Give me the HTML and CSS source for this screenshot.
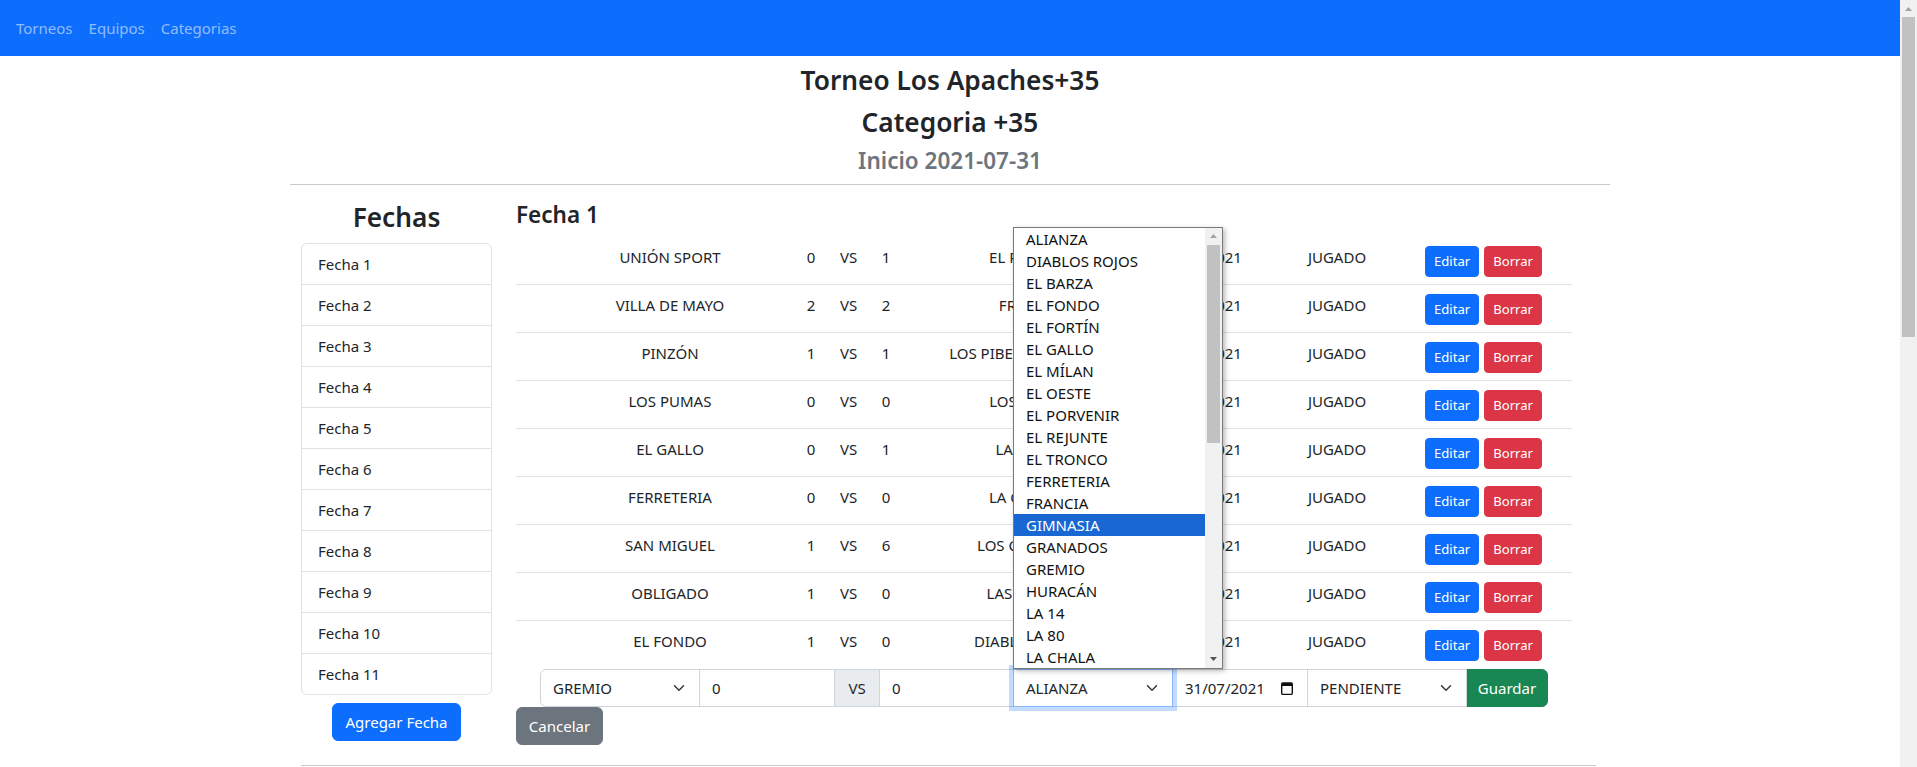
FILE: index.html
```html
<!DOCTYPE html>
<html lang="es">
<head>
<meta charset="utf-8">
<title>Torneo Los Apaches+35</title>
<link rel="stylesheet" href="styles.css">
</head>
<body>
<div class="app">
  <div class="page">
    <nav class="navbar">
      <a class="nav-link" href="#">Torneos</a>
      <a class="nav-link" href="#">Equipos</a>
      <a class="nav-link" href="#">Categorias</a>
    </nav>
    <main class="container">
      <header class="titles">
        <h3 class="title">Torneo Los Apaches+35</h3>
        <h3 class="title">Categoria +35</h3>
        <h4 class="subtitle">Inicio 2021-07-31</h4>
      </header>
      <hr class="rule-top">
      <div class="layout">
        <aside class="fechas">
          <h3 class="title">Fechas</h3>
          <ul class="list-group">
            <li class="list-item">Fecha 1</li>
            <li class="list-item">Fecha 2</li>
            <li class="list-item">Fecha 3</li>
            <li class="list-item">Fecha 4</li>
            <li class="list-item">Fecha 5</li>
            <li class="list-item">Fecha 6</li>
            <li class="list-item">Fecha 7</li>
            <li class="list-item">Fecha 8</li>
            <li class="list-item">Fecha 9</li>
            <li class="list-item">Fecha 10</li>
            <li class="list-item">Fecha 11</li>
          </ul>
          <button class="btn btn-primary agregar">Agregar Fecha</button>
        </aside>
        <section class="fecha">
          <h4 class="fecha-title">Fecha 1</h4>
          <div class="matches">
            <div class="match"><span></span><span class="cell">UNIÓN SPORT</span><span class="cell">0</span><span class="cell">VS</span><span class="cell">1</span><span class="cell">EL REJUNTE</span><span class="cell">31/07/2021</span><span class="cell">JUGADO</span><span class="actions"><button class="btn btn-sm btn-primary">Editar</button><button class="btn btn-sm btn-danger">Borrar</button></span></div>
            <div class="match"><span></span><span class="cell">VILLA DE MAYO</span><span class="cell">2</span><span class="cell">VS</span><span class="cell">2</span><span class="cell">FRANCIA</span><span class="cell">31/07/2021</span><span class="cell">JUGADO</span><span class="actions"><button class="btn btn-sm btn-primary">Editar</button><button class="btn btn-sm btn-danger">Borrar</button></span></div>
            <div class="match"><span></span><span class="cell">PINZÓN</span><span class="cell">1</span><span class="cell">VS</span><span class="cell">1</span><span class="cell">LOS PIBES DEL BARRIO</span><span class="cell">31/07/2021</span><span class="cell">JUGADO</span><span class="actions"><button class="btn btn-sm btn-primary">Editar</button><button class="btn btn-sm btn-danger">Borrar</button></span></div>
            <div class="match"><span></span><span class="cell">LOS PUMAS</span><span class="cell">0</span><span class="cell">VS</span><span class="cell">0</span><span class="cell">LOS TIGRES</span><span class="cell">31/07/2021</span><span class="cell">JUGADO</span><span class="actions"><button class="btn btn-sm btn-primary">Editar</button><button class="btn btn-sm btn-danger">Borrar</button></span></div>
            <div class="match"><span></span><span class="cell">EL GALLO</span><span class="cell">0</span><span class="cell">VS</span><span class="cell">1</span><span class="cell">LA CHALA</span><span class="cell">31/07/2021</span><span class="cell">JUGADO</span><span class="actions"><button class="btn btn-sm btn-primary">Editar</button><button class="btn btn-sm btn-danger">Borrar</button></span></div>
            <div class="match"><span></span><span class="cell">FERRETERIA</span><span class="cell">0</span><span class="cell">VS</span><span class="cell">0</span><span class="cell">LA CANCHA</span><span class="cell">31/07/2021</span><span class="cell">JUGADO</span><span class="actions"><button class="btn btn-sm btn-primary">Editar</button><button class="btn btn-sm btn-danger">Borrar</button></span></div>
            <div class="match"><span></span><span class="cell">SAN MIGUEL</span><span class="cell">1</span><span class="cell">VS</span><span class="cell">6</span><span class="cell">LOS CANARIOS</span><span class="cell">31/07/2021</span><span class="cell">JUGADO</span><span class="actions"><button class="btn btn-sm btn-primary">Editar</button><button class="btn btn-sm btn-danger">Borrar</button></span></div>
            <div class="match"><span></span><span class="cell">OBLIGADO</span><span class="cell">1</span><span class="cell">VS</span><span class="cell">0</span><span class="cell">LAS PALMAS</span><span class="cell">31/07/2021</span><span class="cell">JUGADO</span><span class="actions"><button class="btn btn-sm btn-primary">Editar</button><button class="btn btn-sm btn-danger">Borrar</button></span></div>
            <div class="match"><span></span><span class="cell">EL FONDO</span><span class="cell">1</span><span class="cell">VS</span><span class="cell">0</span><span class="cell">DIABLOS ROJOS</span><span class="cell">31/07/2021</span><span class="cell">JUGADO</span><span class="actions"><button class="btn btn-sm btn-primary">Editar</button><button class="btn btn-sm btn-danger">Borrar</button></span></div>
          </div>
          <div class="form-row">
            <div class="ctl select first w-select"><span>GREMIO</span><svg class="chev" width="16" height="12" viewBox="0 0 16 16"><path d="m2 5 6 6 6-6" fill="none" stroke="#343a40" stroke-width="2" stroke-linecap="round" stroke-linejoin="round"/></svg></div>
            <div class="ctl w-input1"><span>0</span></div>
            <div class="ctl addon">VS</div>
            <div class="ctl w-input2"><span>0</span></div>
            <div class="ctl select focused w-select"><span>ALIANZA</span><svg class="chev" width="16" height="12" viewBox="0 0 16 16"><path d="m2 5 6 6 6-6" fill="none" stroke="#343a40" stroke-width="2" stroke-linecap="round" stroke-linejoin="round"/></svg></div>
            <div class="ctl date w-input1"><span>31/07/2021</span><svg class="cal" width="16" height="16" viewBox="0 0 16 16"><rect x="2.7" y="3" width="10.6" height="11.4" rx="1.2" fill="none" stroke="#111" stroke-width="1.4"/><rect x="2.7" y="3" width="10.6" height="3" fill="#111"/></svg></div>
            <div class="ctl select w-select"><span>PENDIENTE</span><svg class="chev" width="16" height="12" viewBox="0 0 16 16"><path d="m2 5 6 6 6-6" fill="none" stroke="#343a40" stroke-width="2" stroke-linecap="round" stroke-linejoin="round"/></svg></div>
            <button class="btn btn-success guardar">Guardar</button>

            <div class="popup">
              <ul class="options">
                <li>ALIANZA</li>
                <li>DIABLOS ROJOS</li>
                <li>EL BARZA</li>
                <li>EL FONDO</li>
                <li>EL FORTÍN</li>
                <li>EL GALLO</li>
                <li>EL MÍLAN</li>
                <li>EL OESTE</li>
                <li>EL PORVENIR</li>
                <li>EL REJUNTE</li>
                <li>EL TRONCO</li>
                <li>FERRETERIA</li>
                <li>FRANCIA</li>
                <li class="selected">GIMNASIA</li>
                <li>GRANADOS</li>
                <li>GREMIO</li>
                <li>HURACÁN</li>
                <li>LA 14</li>
                <li>LA 80</li>
                <li>LA CHALA</li>
              </ul>
              <div class="sb sb-popup">
                <div class="sb-arrow"><svg width="7" height="4" viewBox="0 0 7 4"><path d="M0 4 3.5 0 7 4z" fill="#a3a3a3"/></svg></div>
                <div class="sb-thumb popup-thumb"></div>
                <div class="sb-spacer"></div>
                <div class="sb-arrow"><svg width="7" height="4" viewBox="0 0 7 4"><path d="M0 0h7L3.5 4z" fill="#505050"/></svg></div>
              </div>
            </div>
          </div>
          <button class="btn btn-secondary cancelar">Cancelar</button>
        </section>
      </div>
      <hr class="rule-bottom">
    </main>
  </div>
  <div class="sb sb-page">
    <div class="sb-arrow"><svg width="7" height="4" viewBox="0 0 7 4"><path d="M0 4 3.5 0 7 4z" fill="#a3a3a3"/></svg></div>
    <div class="sb-thumb page-thumb"></div>
  </div>
</div>
</body>
</html>
```
FILE: styles.css
```css
* { box-sizing: border-box; }

html, body {
  margin: 0;
  height: 100%;
}

body {
  font-family: "Noto Sans", "Open Sans", sans-serif;
  font-size: 15px;
  line-height: 24px;
  color: #212529;
  background: #fff;
  overflow: hidden;
}

.app {
  display: flex;
  height: 100vh;
}

.page {
  flex: 1;
  min-width: 0;
}

/* navbar */
.navbar {
  height: 56px;
  background: #0d6efd;
  display: flex;
  align-items: center;
  padding-left: 8px;
}

.nav-link {
  color: rgba(255, 255, 255, 0.55);
  text-decoration: none;
  padding: 0 8px;
}

/* container */
.container {
  width: 1320px;
  margin: 0 auto;
  padding-top: 8px;
}

.titles {
  text-align: center;
}

.title {
  font-size: 26.25px;
  font-weight: 600;
  line-height: 33.6px;
  margin: 0 0 8px;
}

.subtitle {
  font-size: 22.5px;
  font-weight: 600;
  line-height: 28.8px;
  margin: 0;
  color: #6c757d;
}

.rule-top {
  border: 0;
  border-top: 1px solid #c8c9ca;
  height: 0;
  margin: 8px 0 16px;
}

.rule-bottom {
  border: 0;
  border-top: 1px solid #c8c9ca;
  height: 0;
  width: 1295px;
  margin: 20px 0 0 11px;
}

.layout {
  display: flex;
  align-items: flex-start;
  gap: 24px;
  padding-left: 11px;
}

/* left column */
.fechas {
  width: 191px;
  display: flex;
  flex-direction: column;
  align-items: center;
}

.list-group {
  list-style: none;
  margin: 0;
  padding: 0;
  width: 100%;
  border: 1px solid #dee2e6;
  border-radius: 6px;
}

.list-item {
  padding: 8px 16px;
  line-height: 24px;
  border-bottom: 1px solid #dee2e6;
}

.list-item:last-child {
  border-bottom: 0;
}

/* buttons */
.btn {
  font-family: inherit;
  font-size: 15px;
  line-height: 24px;
  padding: 6px 12px;
  border: 1px solid transparent;
  border-radius: 6px;
  color: #fff;
  cursor: pointer;
}

.btn-primary { background: #0d6efd; border-color: #0d6efd; }
.btn-danger { background: #dc3545; border-color: #dc3545; }
.btn-success { background: #198754; border-color: #198754; }
.btn-secondary { background: #6c757d; border-color: #6c757d; }

.btn-sm {
  font-size: 13.125px;
  line-height: 21px;
  padding: 4px 8px;
  border-radius: 4px;
}

.agregar {
  margin-top: 8px;
}

/* right column */
.fecha {
  width: 1056px;
}

.fecha-title {
  font-size: 22.5px;
  font-weight: 600;
  line-height: 28.8px;
  margin: 0 0 7px;
}

.match {
  display: grid;
  grid-template-columns: 32px 244px 38px 37px 38px 250px 94px 176px 147px;
  height: 48px;
  border-bottom: 1px solid #dee2e6;
}

.match:last-child {
  border-bottom: 0;
}

.cell {
  padding-top: 8px;
  line-height: 24px;
  text-align: center;
  white-space: nowrap;
  display: flex;
  justify-content: center;
  overflow: visible;
}

.actions {
  display: flex;
  align-items: flex-start;
  gap: 5px;
  padding-top: 9px;
}

/* input group */
.form-row {
  position: relative;
  display: flex;
  width: 1008px;
  height: 38px;
  margin-left: 24px;
}

.ctl {
  position: relative;
  height: 38px;
  border: 1px solid #ced4da;
  padding: 6px 12px;
  line-height: 24px;
  margin-left: -1px;
  display: flex;
  align-items: center;
  justify-content: space-between;
  background: #fff;
  white-space: nowrap;
}

.ctl.first {
  margin-left: 0;
  border-radius: 6px 0 0 6px;
}

.w-select { width: 160px; }
.w-input1 { width: 136px; }
.w-input2 { width: 135px; }

.addon {
  width: 46px;
  justify-content: center;
  background: #e9ecef;
}

.focused {
  border-color: #86b7fe;
  box-shadow: 0 0 0 4px rgba(13, 110, 253, 0.25);
  z-index: 2;
}

.chev,
.cal {
  flex: none;
}

.guardar {
  margin-left: -1px;
  width: 82px;
  height: 38px;
  border-radius: 0 6px 6px 0;
  padding: 6px 0;
}

.cancelar {
  width: 87px;
  height: 38px;
  padding: 6px 0;
}

/* dropdown popup */
.popup {
  position: absolute;
  left: 473px;
  bottom: 100%;
  width: 210px;
  height: 442px;
  border: 1px solid #7a7a7a;
  background: #fff;
  display: flex;
  box-shadow: 2px 2px 5px rgba(0, 0, 0, 0.28);
  z-index: 5;
}

.options {
  list-style: none;
  margin: 0;
  padding: 0;
  flex: 1;
  min-width: 0;
}

.options li {
  height: 22px;
  line-height: 22px;
  padding-left: 12px;
  white-space: nowrap;
  color: #111;
}

.options li.selected {
  background: #1967d2;
  color: #fff;
}

/* scrollbars */
.sb {
  width: 17px;
  flex: none;
  background: #f1f1f1;
  display: flex;
  flex-direction: column;
}

.sb-arrow {
  height: 17px;
  display: flex;
  align-items: center;
  justify-content: center;
  flex: none;
}

.sb-thumb {
  margin: 0 2px;
  background: #c1c1c1;
  flex: none;
}

.popup-thumb { height: 198px; }
.page-thumb { height: 320px; }

.sb-spacer { flex: 1; }
```
